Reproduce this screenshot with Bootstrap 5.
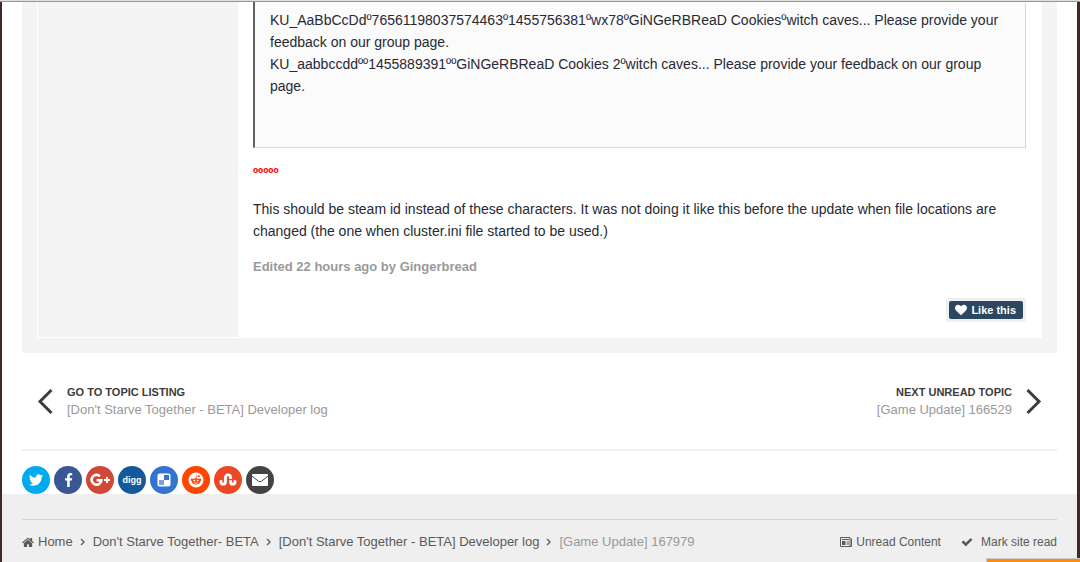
<!DOCTYPE html>
<html lang="en">
<head>
<meta charset="utf-8">
<meta name="viewport" content="width=device-width, initial-scale=1">
<title>[Game Update] 167979</title>
<link href="https://cdn.jsdelivr.net/npm/bootstrap@5.3.0/dist/css/bootstrap.min.css" rel="stylesheet">
<style>
  body { font-family: "Liberation Sans", Arial, sans-serif; font-size: 14px; line-height: 22px; color: #272a34; background: #fff; overflow: hidden; }
  a { color: inherit; text-decoration: none; }
  svg { display: block; flex: none; }
  .top-edge { height: 2px; background: #ddd; border-bottom: 1px solid #999; }
  .page-frame { min-height: calc(100vh - 2px); border: solid #3f2b26; border-width: 0 3px 0 2px; }
  .gutter { padding-left: 20px; padding-right: 20px; }
  .post-shell { background: #f4f4f4; padding: 0 15px 15px; }
  .post-author { width: 202px; background: #f4f4f4; border: solid #fff; border-width: 0 1px 1px; }
  .post-body { padding: 0 16px 16px 14px; min-width: 0; }
  .post-body p { margin: 0 0 14px; }
  .quoted { background: #fbfbfb; border: solid #d8d8d8; border-width: 0 1px 1px 0; border-left: 2px solid #606264; padding: 7px 15px 50px; margin-bottom: 14px; }
  .red-mark { color: #f00; }
  .edited { font-size: 13px; color: #9a9a9a; }
  .like-wrap { background: #f0f0f0; padding: 3px; border-radius: 3px; margin-top: 6px; }
  .like-btn { background: #2c4760; color: #fff; border: 0; border-radius: 2px; font-size: 11px; line-height: 18px; padding: 0 7px 0 6px; }
  .pager-row { padding: 31px 15px; border-bottom: 2px solid #f0f0f0; color: #3c3c3c; }
  .pager-row a { line-height: 17px; }
  .pager-title { font-size: 11px; }
  .pager-sub { font-size: 13px; color: #999; }
  .share-list { padding-top: 15px; }
  .share-link { width: 28px; height: 28px; border-radius: 50%; color: #fff; }
  .digg-word { font-size: 9px; line-height: 28px; }
  .page-foot { background: #efefef; color: #5a5a5a; padding-top: 25px; }
  .foot-bar { border-top: 1px solid #d5d5d5; padding: 11px 0; font-size: 13px; }
  .foot-links { font-size: 12px; column-gap: 20px; }
  .foot-current { color: #999; }
  .notice-tab { width: 94px; height: 4px; background: #ff8a0c; border: solid #ccc; border-width: 1px 0 0 1px; }
</style>
</head>
<body>
<div class="top-edge"></div>
<div class="page-frame d-flex flex-column">
  <main class="gutter">
    <article class="post-shell">
      <div class="d-flex bg-white">
        <aside class="post-author flex-shrink-0"></aside>
        <div class="post-body flex-grow-1">
          <blockquote class="quoted">KU_AaBbCcDdº76561198037574463º1455756381ºwx78ºGiNGeRBReaD Cookiesºwitch caves... Please provide your feedback on our group page.<br>KU_aabbccddºº1455889391ººGiNGeRBReaD Cookies 2ºwitch caves... Please provide your feedback on our group page.</blockquote>
          <p class="red-mark fw-bold">ººººº</p>
          <p>This should be steam id instead of these characters. It was not doing it like this before the update when file locations are changed (the one when cluster.ini file started to be used.)</p>
          <p class="edited fw-bold">Edited 22 hours ago by Gingerbread</p>
          <div class="d-flex justify-content-end">
            <div class="like-wrap">
              <button type="button" class="like-btn fw-bold d-flex align-items-center gap-1">
                <svg width="12" height="12" viewBox="0 0 1792 1792" fill="currentColor" aria-hidden="true"><path d="M896 1664q-26 0-44-18l-624-602q-10-8-27.500-26t-55.500-65.500-68-97.500-53.500-121-23.500-138q0-220 127-344t351-124q62 0 126.500 21.500t120 58 95.500 68.500 76 68q36-36 76-68t95.500-68.500 120-58 126.500-21.500q224 0 351 124t127 344q0 221-229 450l-623 600q-18 18-44 18z"/></svg>
                Like this
              </button>
            </div>
          </div>
        </div>
      </div>
    </article>

    <nav class="pager-row d-flex justify-content-between" aria-label="Topics">
      <a href="#" class="d-flex align-items-center">
        <svg width="30" height="34" viewBox="0 0 30 34" fill="none" stroke="currentColor" stroke-width="3" aria-hidden="true"><path d="M14.500 6 3 17.500 14.500 29"/></svg>
        <span><span class="pager-title fw-bold d-block">GO TO TOPIC LISTING</span><span class="pager-sub d-block">[Don't Starve Together - BETA] Developer log</span></span>
      </a>
      <a href="#" class="d-flex align-items-center text-end">
        <span><span class="pager-title fw-bold d-block">NEXT UNREAD TOPIC</span><span class="pager-sub d-block">[Game Update] 166529</span></span>
        <svg width="30" height="34" viewBox="0 0 30 34" fill="none" stroke="currentColor" stroke-width="3" aria-hidden="true"><path d="M15.500 6 27 17.500 15.500 29"/></svg>
      </a>
    </nav>

    <div class="share-list d-flex gap-1">
      <a href="#" class="share-link d-flex align-items-center justify-content-center" style="background:#00aaee" aria-label="Twitter"><svg width="16" height="16" viewBox="0 0 1792 1792" fill="currentColor"><path d="M1684 408q-67 98-162 167 1 14 1 42 0 130-38 259.500t-115.500 248.500-184.500 210.500-258 146-323 54.500q-271 0-496-145 35 4 78 4 225 0 401-138-105-2-188-64.500t-114-159.500q33 5 61 5 43 0 85-11-112-23-185.500-111.500t-73.500-205.500v-4q68 38 146 41-66-44-105-115t-39-154q0-88 44-163 121 149 294.500 238.500t371.500 99.500q-8-38-8-74 0-134 94.500-228.500t228.500-94.500q140 0 236 102 109-21 205-78-37 115-142 178 93-10 186-50z"/></svg></a>
      <a href="#" class="share-link d-flex align-items-center justify-content-center" style="background:#3a5795" aria-label="Facebook"><svg width="15" height="14" viewBox="0 0 1792 1664" fill="currentColor"><path d="M1343 12v264h-157q-86 0-116 36t-30 108v189h293l-39 296h-254v759h-306v-759h-255v-296h255v-218q0-186 104-288.500t277-102.500q147 0 228 12z"/></svg></a>
      <a href="#" class="share-link d-flex align-items-center justify-content-center" style="background:#d04837" aria-label="Google Plus"><svg width="20" height="14" viewBox="0 0 20 14" fill="none" stroke="currentColor"><path stroke-width="2.600" d="M10 3.300A4.900 4.900 0 1 0 11.400 7.200H6.600"/><path stroke-width="2" d="M17 4v6M14 7h6"/></svg></a>
      <a href="#" class="share-link d-flex align-items-center justify-content-center" style="background:#14589e"><span class="digg-word fw-bold">digg</span></a>
      <a href="#" class="share-link d-flex align-items-center justify-content-center" style="background:#3274d2" aria-label="Delicious"><svg width="14" height="14" viewBox="0 0 14 14"><rect x=".5" y=".5" width="13" height="13" rx="2" fill="#fff"/><path fill="#3274d2" d="M7 2h5v5H7z"/><path fill="#7d9fe0" d="M2 7h5v5H2z"/></svg></a>
      <a href="#" class="share-link d-flex align-items-center justify-content-center" style="background:#ff4500" aria-label="Reddit"><svg width="16" height="16" viewBox="0 0 16 16"><circle cx="8" cy="8" r="7.500" fill="#fff"/><g fill="#ff4500"><ellipse cx="8" cy="9.300" rx="4.200" ry="3.100"/><circle cx="3.900" cy="7.800" r="1.200"/><circle cx="12.100" cy="7.800" r="1.200"/><circle cx="10.900" cy="4.200" r="1"/></g><path d="m8 6.500.6-2.700 2 .4" fill="none" stroke="#ff4500" stroke-width=".7"/><circle cx="6.300" cy="8.600" r=".9" fill="#fff"/><circle cx="9.700" cy="8.600" r=".9" fill="#fff"/><path d="M6.200 10.700q1.800 1.200 3.600 0" fill="none" stroke="#fff" stroke-width=".8"/></svg></a>
      <a href="#" class="share-link d-flex align-items-center justify-content-center" style="background:#eb4823" aria-label="StumbleUpon"><svg width="18" height="16" viewBox="0 0 18 16" fill="none" stroke="currentColor" stroke-width="2.900"><path d="M2 8.200v1.700a2.200 2.200 0 0 0 4.400 0V5.500a2.600 2.600 0 0 1 5.200 0v1.400M11.600 8.200v1.700a2.200 2.200 0 0 0 4.400 0V8.200"/></svg></a>
      <a href="#" class="share-link d-flex align-items-center justify-content-center" style="background:#444" aria-label="Email"><svg width="16" height="12" viewBox="0 0 16 12"><rect width="16" height="12" rx="1" fill="#fff"/><path d="M0 2.200 6.500 7.200q1.500 1.100 3 0L16 2.200" fill="none" stroke="#444" stroke-width="1"/></svg></a>
    </div>
  </main>

  <footer class="page-foot gutter flex-grow-1">
    <div class="foot-bar d-flex justify-content-between">
      <nav class="d-flex align-items-center" aria-label="Breadcrumb">
        <a href="#" class="d-flex align-items-center gap-1"><svg width="12" height="13" viewBox="64 0 1664 1792" fill="currentColor" aria-hidden="true"><path d="M1472 992v480q0 26-19 45t-45 19h-384v-384h-256v384h-384q-26 0-45-19t-19-45v-480q0-1 .5-3t.5-3l575-474 575 474q1 2 1 6zm223-69l-62 74q-8 9-21 11h-3q-13 0-21-7l-692-577-692 577q-12 8-24 7-13-2-21-11l-62-74q-8-10-7-23.500t11-21.500l719-599q32-26 76-26t76 26l244 204v-195q0-14 9-23t23-9h192q14 0 23 9t9 23v408l219 182q10 8 11 21.500t-7 23.500z"/></svg>Home</a>
        <svg width="20" height="10" viewBox="0 0 20 10" fill="none" stroke="currentColor" stroke-width="1.300" aria-hidden="true"><path d="m8 2 3 3-3 3"/></svg>
        <a href="#">Don't Starve Together- BETA</a>
        <svg width="20" height="10" viewBox="0 0 20 10" fill="none" stroke="currentColor" stroke-width="1.300" aria-hidden="true"><path d="m8 2 3 3-3 3"/></svg>
        <a href="#">[Don't Starve Together - BETA] Developer log</a>
        <svg width="20" height="10" viewBox="0 0 20 10" fill="none" stroke="currentColor" stroke-width="1.300" aria-hidden="true"><path d="m8 2 3 3-3 3"/></svg>
        <span class="foot-current">[Game Update] 167979</span>
      </nav>
      <div class="foot-links d-flex align-items-center">
        <a href="#" class="d-flex align-items-center gap-1"><svg width="12" height="10" viewBox="0 0 12 10" fill="none" stroke="currentColor" aria-hidden="true"><path d="M.5.500h9.500v9H.5zM10 2h1.500v7.500H10M2 2.500h7M6.500 5H9M6.500 7H9"/><path fill="currentColor" stroke="none" d="M2 4h3.500v4H2z"/></svg>Unread Content</a>
        <a href="#" class="d-flex align-items-center gap-2"><svg width="12" height="12" viewBox="0 0 1792 1792" fill="currentColor" aria-hidden="true"><path d="M1671 566q0 40-28 68l-724 724-136 136q-28 28-68 28t-68-28l-136-136-362-362q-28-28-28-68t28-68l136-136q28-28 68-28t68 28l294 295 656-657q28-28 68-28t68 28l136 136q28 28 28 68z"/></svg>Mark site read</a>
      </div>
    </div>
  </footer>
</div>
<div class="notice-tab position-fixed bottom-0 end-0"></div>
<script src="https://cdn.jsdelivr.net/npm/bootstrap@5.3.0/dist/js/bootstrap.bundle.min.js"></script>
</body>
</html>
